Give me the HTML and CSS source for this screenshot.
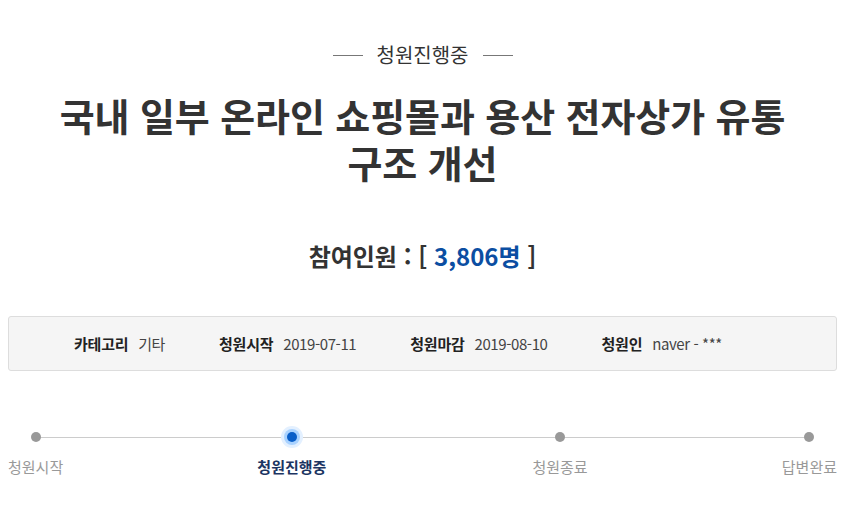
FILE: index.html
```html
<!DOCTYPE html>
<html lang="ko">
<head>
    <meta charset="UTF-8">
    <meta name="viewport" content="width=device-width, initial-scale=1.0">
    <title>청원진행중</title>
    <link rel="stylesheet" href="styles.css">
</head>
<body>
    <div class="petition">
        <div class="status">
            <span class="status-line"></span>
            <span>청원진행중</span>
            <span class="status-line"></span>
        </div>

        <h1 class="title">국내 일부 온라인 쇼핑몰과 용산 전자상가 유통<br>구조 개선</h1>

        <p class="count">참여인원 : [ <span class="count-num">3,806명</span> ]</p>

        <ul class="info">
            <li><b>카테고리</b> 기타</li>
            <li><b>청원시작</b> 2019-07-11</li>
            <li><b>청원마감</b> 2019-08-10</li>
            <li><b>청원인</b> naver - ***</li>
        </ul>

        <ol class="steps">
            <li class="step"><span class="dot"></span><span class="label">청원시작</span></li>
            <li class="step active"><span class="dot"></span><span class="label">청원진행중</span></li>
            <li class="step"><span class="dot"></span><span class="label">청원종료</span></li>
            <li class="step"><span class="dot"></span><span class="label">답변완료</span></li>
        </ol>
    </div>
</body>
</html>
```

FILE: styles.css
```css
:root {
    --text-color: #333;
    --blue: #0b4ea2;
    --muted: #999;
}

* {
    box-sizing: border-box;
    margin: 0;
    padding: 0;
}

body {
    font-family: "Noto Sans CJK KR", "Noto Sans", sans-serif;
    color: var(--text-color);
    background: #fff;
    padding: 0 8px;
}

.petition {
    text-align: center;
}

.status {
    display: flex;
    justify-content: center;
    align-items: center;
    gap: 14px;
    padding-top: 40px;
    font-size: 20px;
    line-height: 30px;
}

.status-line {
    width: 30px;
    height: 1px;
    background: #777;
}

.title {
    margin-top: 21px;
    font-size: 38px;
    font-weight: 700;
    line-height: 47px;
    letter-spacing: -0.1px;
}

.count {
    margin-top: 54px;
    font-size: 24px;
    font-weight: 700;
    line-height: 34px;
}

.count-num {
    color: var(--blue);
}

.info {
    list-style: none;
    display: flex;
    gap: 54px;
    margin-top: 43px;
    padding-left: 65px;
    height: 55px;
    align-items: center;
    background: #f5f5f5;
    border: 1px solid #ddd;
    border-radius: 3px;
    font-size: 15px;
    color: #444;
    letter-spacing: -0.4px;
}

.info b {
    color: #222;
    margin-right: 6px;
    letter-spacing: -0.2px;
}

.steps {
    list-style: none;
    position: relative;
    display: flex;
    justify-content: space-between;
    margin-top: 61px;
}

.steps::before {
    content: "";
    position: absolute;
    left: 26px;
    right: 27px;
    top: 5px;
    height: 1px;
    background: #ccc;
}

.step {
    position: relative;
    display: flex;
    flex-direction: column;
    align-items: center;
    gap: 14px;
}

.step.active {
    margin-right: 12px;
}

.dot {
    width: 10px;
    height: 10px;
    border-radius: 50%;
    background: var(--muted);
}

.active .dot {
    background: #0a5fc9;
    box-shadow: 0 0 0 3px #a9d2ff, 0 0 0 6px #e3f0ff;
}

.label {
    font-size: 15px;
    line-height: 22px;
    color: var(--muted);
}

.active .label {
    color: #1c3562;
    font-weight: 700;
}
```
